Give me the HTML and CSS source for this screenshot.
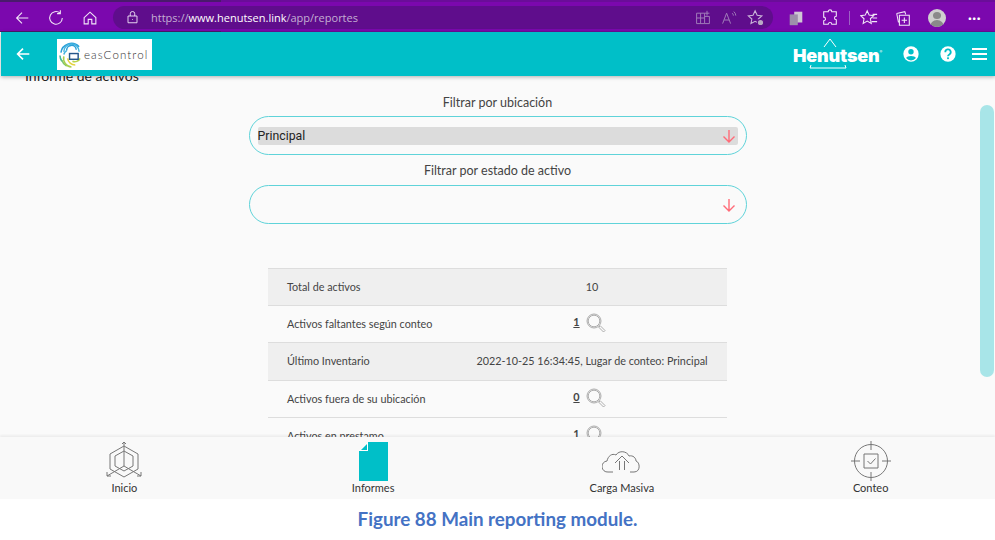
FILE: index.html
```html
<!DOCTYPE html>
<html lang="en"><head>
    <meta charset="UTF-8">
    <meta name="viewport" content="width=device-width, initial-scale=1.0">
    <title>Henutsen reportes</title>
    <link rel="stylesheet" href="styles.css">
</head>
<body>

    <div class="browser-bar">
        <div class="browser-nav">
            <svg class="ico" viewBox="0 0 20 20"><path d="M17 10H4M10 4l-6 6 6 6"/></svg>
            <svg class="ico" viewBox="0 0 20 20"><path d="M14.5 4.5A7 7 0 1 0 17 10M14.8 1.5v3.6h-3.6"/></svg>
            <svg class="ico" viewBox="0 0 20 20"><path d="M3.5 9.5L10 3.5l6.5 6v7h-4.5v-5H8v5H3.5z"/></svg>
        </div>
        <div class="address">
            <svg class="ico ico-small" viewBox="0 0 20 20"><path d="M4 8h12v9H4zM7 8V5a3 3 0 0 1 6 0v3M10 12v1"/></svg>
            <span class="url">https://<b>www.henutsen.link</b>/app/reportes</span>
            <div class="address-tools">
                <svg class="ico ico-dim" viewBox="0 0 20 20"><path d="M2 4h10v13H2zM2 10h10M7 4v13M12 8h6v9h-6M15 1v6M12 4h6"/></svg>
                <svg class="ico ico-dim" viewBox="0 0 20 20"><path d="M2 17L7 4l5 13M4 12.500h6M14 4a4 4 0 0 1 1.500 3M16 2a7 7 0 0 1 2.500 5"/></svg>
                <svg class="ico ico-mid" viewBox="0 0 20 20"><path d="M9 2l2.300 5 5.200.6-3.900 3.500 1 5.100L9 13.700l-4.600 2.500 1-5.100L1.500 7.600 6.700 7z"/><circle class="fill-grey" cx="15" cy="15" r="3.500"/></svg>
            </div>
        </div>
        <div class="browser-tools">
            <svg class="ico-solid" viewBox="0 0 20 20"><path d="M8 3h9v12H8z" fill="#cfc8d4"/><path d="M3 6h9v12H3z" fill="#9d8fab"/></svg>
            <svg class="ico" viewBox="0 0 20 20"><path d="M8 3a2 2 0 0 1 4 0h5v5a2 2 0 0 0 0 4v5h-5a2 2 0 0 0-4 0H3v-4a2 2 0 0 0 0-4V3z"/></svg>
            <span class="tool-divider"></span>
            <svg class="ico" viewBox="0 0 20 20"><path d="M8 2l2.200 4.800 5 .6-3.700 3.500 1 5.100L8 13.500 3.500 16l1-5.100L.8 7.400l5-.6zM14 6h5M14 10h5M13 14h6"/></svg>
            <svg class="ico" viewBox="0 0 20 20"><path d="M3 5l9-2 1 3M6 7h11v11H6zM3 5l2 10M11.500 9.500v6M8.500 12.500h6"/></svg>
            <span class="avatar"><span class="avatar-head"></span><span class="avatar-body"></span></span>
            <span class="more">···</span>
        </div>
    </div>

    <header class="app-header">
        <svg class="ico header-back" viewBox="0 0 20 20"><path d="M17 10H4M10 4l-6 6 6 6"/></svg>
        <div class="logo">
            <svg class="logo-mark" viewBox="0 0 24 28">
                <path d="M2 12a11 11 0 0 1 19-6" stroke="#2b9fd8"/>
                <path d="M5 11a8 8 0 0 1 16 0" stroke="#45b5e0"/>
                <path d="M8 10a5 5 0 0 1 10-1" stroke="#2b9fd8"/>
                <path d="M5 14a6 6 0 0 1 3-4" stroke="#45b5e0"/>
                <path d="M1 15a11 11 0 0 0 2 6" stroke="#3fb59c"/>
                <path d="M3 20a10 10 0 0 0 5 6" stroke="#7fc46b"/>
                <path d="M5 16a9 9 0 0 0 8 11" stroke="#a9cf4f"/>
                <path d="M9 18a8 8 0 0 0 8 7" stroke="#e6d23f"/>
                <path d="M14 21a6 6 0 0 0 8-3" stroke="#b9d44a"/>
                <rect class="logo-box" x="11" y="13" width="9" height="6"/>
            </svg>
            <span class="logo-text">easControl</span>
        </div>
        <div class="brand">
            <svg class="brand-lines" viewBox="0 0 88 34"><path d="M31 9l6-8 6 8M18 27l-1 3h36l-1-3"/></svg>
            <span class="brand-name">Henutsen<sup>®</sup></span>
        </div>
        <svg class="header-icon" viewBox="0 0 20 20"><circle cx="10" cy="10" r="8.500" fill="#fff"/><circle cx="10" cy="7.500" r="3" fill="#00bfc8"/><path d="M4.500 14.500c1-3 10-3 11 0a7 7 0 0 1-11 0z" fill="#00bfc8"/></svg>
        <svg class="header-icon" viewBox="0 0 20 20"><circle cx="10" cy="10" r="8.500" fill="#fff"/><path d="M7 8a3 3 0 1 1 4.500 2.500c-1 .6-1.500 1-1.500 2" fill="none" stroke="#00bfc8" stroke-width="2"/><rect x="9" y="13.700" width="2" height="2" fill="#00bfc8"/></svg>
        <div class="hamburger"><span></span><span></span><span></span></div>
    </header>

    <main class="content">
        <h1 class="page-title">Informe de activos</h1>

        <label class="filter-label">Filtrar por ubicación</label>
        <div class="filter-box">
            <div class="filter-value selected">Principal</div>
            <svg class="filter-arrow" viewBox="0 0 14 14"><path d="M7 1v12M1.500 7.500L7 13l5.500-5.500"/></svg>
        </div>

        <label class="filter-label">Filtrar por estado de activo</label>
        <div class="filter-box filter-box-second">
            <div class="filter-value"></div>
            <svg class="filter-arrow" viewBox="0 0 14 14"><path d="M7 1v12M1.500 7.500L7 13l5.500-5.500"/></svg>
        </div>

        <table class="report">
            <tr>
                <td>Total de activos</td>
                <td class="val">10</td>
            </tr>
            <tr>
                <td>Activos faltantes según conteo</td>
                <td class="val"><u>1</u><svg class="lens" viewBox="0 0 20 20"><circle cx="8" cy="8" r="7"/><circle cx="8" cy="8" r="5.800"/><path d="M13 13l1 1M14 12.500l5 5-1.500 1.500-5-5"/></svg></td>
            </tr>
            <tr class="row-tall">
                <td>Último Inventario</td>
                <td class="val">2022-10-25 16:34:45, Lugar de conteo: Principal</td>
            </tr>
            <tr>
                <td>Activos fuera de su ubicación</td>
                <td class="val"><u>0</u><svg class="lens" viewBox="0 0 20 20"><circle cx="8" cy="8" r="7"/><circle cx="8" cy="8" r="5.800"/><path d="M13 13l1 1M14 12.500l5 5-1.500 1.500-5-5"/></svg></td>
            </tr>
            <tr>
                <td>Activos en prestamo</td>
                <td class="val"><u>1</u><svg class="lens" viewBox="0 0 20 20"><circle cx="8" cy="8" r="7"/><circle cx="8" cy="8" r="5.800"/><path d="M13 13l1 1M14 12.500l5 5-1.500 1.500-5-5"/></svg></td>
            </tr>
        </table>

        <div class="scroll-thumb"></div>
    </main>

    <nav class="bottom-nav">
        <div class="nav-item">
            <svg class="nav-icon" viewBox="0 0 40 40"><path d="M20 5l14 8v15l-14 8-14-8V13zM20 10l9 5v10l-9 5-9-5V15zM20 1v24M20 25l-17 10M20 25l17 10M18 3l2-2 2 2M3 31v4h4M37 31v4h-4"/></svg>
            <span>Inicio</span>
        </div>
        <div class="nav-item">
            <svg class="nav-icon nav-icon-doc" viewBox="0 0 29 39"><path d="M9 0h20v39H0V9h9z" fill="#00bfc8"/><path d="M0 9l9-9v9z" fill="#ffffff"/><path d="M2 8l6-6v6z" fill="#00bfc8"/></svg>
            <span>Informes</span>
        </div>
        <div class="nav-item">
            <svg class="nav-icon nav-icon-wide" viewBox="0 0 40 24"><path d="M11 22H6a5.500 5.500 0 0 1-1-11c1-5 5-8 9-6 3-5 11-4 13 1 4-1 7 2 7 5 4 1 5 11-2 11h-4M13 13l7-7 7 7M17.500 11v9M22.500 11v9"/></svg>
            <span>Carga Masiva</span>
        </div>
        <div class="nav-item">
            <svg class="nav-icon" viewBox="0 0 40 40"><circle cx="20" cy="20" r="16.500"/><path d="M20 0v9M20 31v9M0 20h9M31 20h9M13 13h14v14H13zM16.500 20l3 3 5-5.500"/></svg>
            <span>Conteo</span>
        </div>
    </nav>

    <p class="caption">Figure 88 Main reporting module.</p>

</body></html>
```

FILE: styles.css
```css
/* screenshot of the reports page, browser bar + app + doc caption */
html, body {
    margin: 0;
    padding: 0;
}

body {
    width: 995px;
    height: 540px;
    overflow: hidden;
    background-color: #ffffff;
    font-family: Lato, sans-serif;
    color: #333333;
    display: flex;
    flex-direction: column;
}

/* browser chrome */
.browser-bar {
    height: 32px;
    flex: none;
    box-sizing: border-box;
    display: flex;
    align-items: center;
    padding: 2px 0 0 13px;
    background-color: #7b08ae;
    border-top: 2px solid #5e1285;
    border-image: linear-gradient(to right, #4a1a6c 222px, #6a0d99 222px) 1;
    border-bottom: 1px solid #6a0d99;
}

.ico {
    width: 18px;
    height: 18px;
    fill: none;
    stroke: #f1e6f7;
    stroke-width: 1.2;
}

.ico-small {
    width: 15px;
    height: 15px;
}

.ico-dim {
    width: 16px;
    height: 16px;
    stroke: #a27fba;
}

.ico-mid {
    width: 18px;
    height: 18px;
    stroke: #c9b4d8;
}

.fill-grey {
    fill: #b9a8c5;
    stroke: #5f0d8c;
}

.ico-solid {
    width: 18px;
    height: 18px;
}

.browser-nav {
    display: flex;
    gap: 16px;
    width: 100px;
}

.address {
    width: 660px;
    height: 23px;
    box-sizing: border-box;
    display: flex;
    align-items: center;
    padding: 0 8px 0 12px;
    background-color: #5f0d8c;
    border-radius: 12px;
}

.url {
    margin-left: 11px;
    font-family: "Open Sans", sans-serif;
    font-size: 11px;
    color: #c4afd3;
    white-space: nowrap;
}

.url b {
    font-weight: 400;
    color: #ffffff;
}

.address-tools {
    margin-left: auto;
    display: flex;
    align-items: center;
    gap: 10px;
}

.browser-tools {
    flex: 1;
    display: flex;
    align-items: center;
    padding-left: 14px;
    gap: 16px;
}

.tool-divider {
    width: 1px;
    height: 14px;
    background-color: #9d62c4;
    margin: 0 -6px;
}

.avatar {
    width: 18px;
    height: 18px;
    border-radius: 50%;
    background-color: #cfcfcf;
    overflow: hidden;
    display: flex;
    flex-direction: column;
    align-items: center;
    flex: none;
}

.avatar-head {
    width: 8px;
    height: 8px;
    margin-top: 3px;
    border-radius: 50%;
    background-color: #8a8a8a;
}

.avatar-body {
    width: 14px;
    height: 8px;
    margin-top: 1px;
    border-radius: 7px 7px 0 0;
    background-color: #8a8a8a;
}

.more {
    margin-left: 6px;
    color: #ffffff;
    font-size: 14px;
    font-weight: 700;
    letter-spacing: 0.5px;
}

/* app header */
.app-header {
    height: 44px;
    flex: none;
    margin-left: 1px;
    display: flex;
    align-items: center;
    background-color: #00bfc8;
    box-shadow: 0 1px 4px rgba(0, 0, 0, 0.3);
    position: relative;
    z-index: 2;
}

.header-back {
    margin-left: 13px;
    stroke: #ffffff;
    stroke-width: 1.8;
}

.logo {
    width: 95px;
    height: 31px;
    margin-left: 25px;
    background-color: #ffffff;
    display: flex;
    align-items: center;
    padding-left: 2px;
    box-sizing: border-box;
}

.logo-mark {
    width: 23px;
    height: 29px;
    flex: none;
    fill: none;
    stroke-width: 1.6;
}

.logo-box {
    fill: #ffffff;
    stroke: #27588a;
    stroke-width: 1.5;
}

.logo-text {
    margin-left: 2px;
    font-family: Lato, sans-serif;
    font-weight: 300;
    font-size: 11.500px;
    letter-spacing: 1.100px;
    color: #333333;
}

.brand {
    margin-left: 641px;
    width: 90px;
    height: 34px;
    position: relative;
    display: flex;
    align-items: center;
}

.brand-lines {
    position: absolute;
    left: 0;
    top: 1px;
    width: 88px;
    height: 34px;
    fill: none;
    stroke: #ffffff;
    stroke-width: 1;
}

.brand-name {
    font-family: Inter, sans-serif;
    font-weight: 900;
    font-size: 18px;
    letter-spacing: -0.2px;
    color: #ffffff;
    margin-top: 2px;
}

.brand-name sup {
    font-size: 4px;
    font-weight: 400;
    vertical-align: 9px;
    line-height: 0;
}

.header-icon {
    width: 18px;
    height: 18px;
    margin-left: 19px;
    flex: none;
}

.hamburger {
    margin-left: 15px;
    width: 15px;
    display: flex;
    flex-direction: column;
    gap: 3px;
}

.hamburger span {
    height: 2px;
    background-color: #ffffff;
}

/* page content */
.content {
    height: 361px;
    flex: none;
    overflow: hidden;
    position: relative;
    background-color: #fafafa;
    display: flex;
    flex-direction: column;
    align-items: center;
}

.page-title {
    align-self: flex-start;
    flex: none;
    margin: -9px 0 0 25px;
    height: 27px;
    font-size: 14px;
    line-height: 17px;
    font-weight: 400;
    color: #222222;
}

.filter-label {
    flex: none;
    margin-top: 1px;
    font-size: 12.500px;
    line-height: 16px;
    color: #444444;
}

.filter-box {
    position: relative;
    flex: none;
    width: 498px;
    height: 39px;
    margin: 5px 0 7px;
    box-sizing: border-box;
    border: 1px solid #5fd3d9;
    border-radius: 20px;
    padding: 10px 8px 0;
}

.filter-box-second {
    margin-top: 6px;
}

.filter-value {
    height: 18px;
    border-radius: 2px;
    font-family: Roboto, sans-serif;
    font-size: 12.300px;
    line-height: 18px;
    color: #222222;
}

.filter-value.selected {
    background-color: #dcdcdc;
}

.filter-arrow {
    position: absolute;
    right: 10px;
    top: 12px;
    width: 14px;
    height: 14px;
    fill: none;
    stroke: #ff6b78;
    stroke-width: 1.4;
}

.report {
    width: 459px;
    margin-top: 37px;
    border-collapse: collapse;
    table-layout: fixed;
    font-size: 10.800px;
    color: #444444;
    flex: none;
}

.report tr {
    height: 37px;
    border-top: 1px solid #dddddd;
}

.report tr.row-tall {
    height: 38px;
}

.report tr:nth-child(odd) {
    background-color: #efefef;
}

.report tr:nth-child(n+5) {
    background-color: transparent;
}

.report td {
    padding: 0 0 2px 19px;
}

.report td:first-child {
    width: 170px;
}

.report td.val {
    padding: 0 0 2px;
    text-align: center;
    white-space: nowrap;
}

.report u {
    font-weight: 700;
}

.lens {
    width: 20px;
    height: 20px;
    margin: 0 5px 0 6px;
    vertical-align: -7px;
    fill: none;
    stroke: #999999;
    stroke-width: 0.8;
}

.scroll-thumb {
    position: absolute;
    right: 1px;
    top: 29px;
    width: 14px;
    height: 272px;
    border-radius: 7px;
    background-color: #a8e5e8;
}

/* bottom tabs */
.bottom-nav {
    height: 62px;
    flex: none;
    display: grid;
    grid-template-columns: repeat(4, 1fr);
    background-color: #f9f9f9;
    box-shadow: 0 -2px 2px rgba(0, 0, 0, 0.05);
    box-sizing: border-box;
    position: relative;
}

.nav-item {
    display: flex;
    flex-direction: column;
    align-items: center;
    font-size: 11px;
    color: #333333;
}

.nav-item span {
    margin-top: auto;
    padding-bottom: 4px;
    line-height: 14px;
}

.nav-icon {
    width: 40px;
    height: 40px;
    margin-top: 4px;
    flex: none;
    fill: none;
    stroke: #777777;
    stroke-width: 1;
}

.nav-icon-doc {
    width: 29px;
    height: 39px;
    margin-top: 5px;
    stroke: none;
}

.nav-icon-wide {
    height: 24px;
    margin-top: 13px;
}

.caption {
    margin: 0;
    height: 41px;
    flex: none;
    text-align: center;
    font-family: Lato, sans-serif;
    font-weight: 700;
    font-size: 18.800px;
    line-height: 39px;
    color: #4472c4;
}
```
